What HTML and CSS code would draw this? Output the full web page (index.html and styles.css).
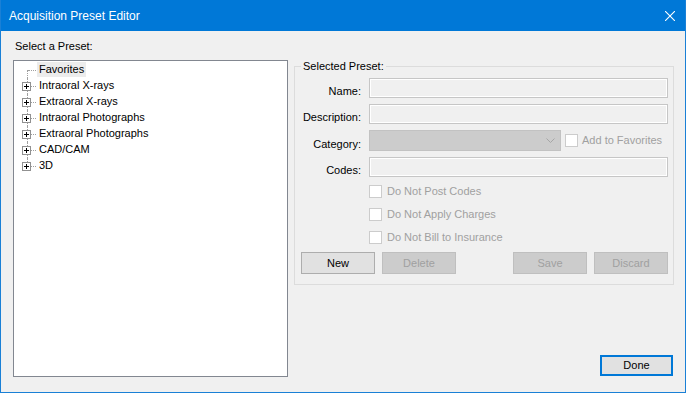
FILE: index.html
```html
<!DOCTYPE html>
<html>
<head>
<meta charset="UTF-8">
<title>Acquisition Preset Editor</title>
<link rel="stylesheet" href="styles.css">
</head>
<body>
<div class="window">
    <div class="titlebar">
        <span class="title">Acquisition Preset Editor</span>
        <svg class="close" width="10" height="10" viewBox="0 0 10 10">
            <path d="M0 0L10 10M10 0L0 10" stroke="#fff" stroke-width="1.1" fill="none"/>
        </svg>
    </div>

    <div class="main">
        <div class="left">
            <div class="caption">Select a Preset:</div>
            <div class="tree">
                <div class="node first">
                    <div class="gutter"></div>
                    <span class="label selected">Favorites</span>
                </div>
                <div class="node">
                    <div class="gutter"><svg class="plus" width="9" height="9"><rect x="0.5" y="0.5" width="8" height="8" fill="#fff" stroke="#919191"/><path d="M2 4.5h5M4.5 2v5" stroke="#000"/></svg></div>
                    <span class="label">Intraoral X-rays</span>
                </div>
                <div class="node">
                    <div class="gutter"><svg class="plus" width="9" height="9"><rect x="0.5" y="0.5" width="8" height="8" fill="#fff" stroke="#919191"/><path d="M2 4.5h5M4.5 2v5" stroke="#000"/></svg></div>
                    <span class="label">Extraoral X-rays</span>
                </div>
                <div class="node">
                    <div class="gutter"><svg class="plus" width="9" height="9"><rect x="0.5" y="0.5" width="8" height="8" fill="#fff" stroke="#919191"/><path d="M2 4.5h5M4.5 2v5" stroke="#000"/></svg></div>
                    <span class="label">Intraoral Photographs</span>
                </div>
                <div class="node">
                    <div class="gutter"><svg class="plus" width="9" height="9"><rect x="0.5" y="0.5" width="8" height="8" fill="#fff" stroke="#919191"/><path d="M2 4.5h5M4.5 2v5" stroke="#000"/></svg></div>
                    <span class="label">Extraoral Photographs</span>
                </div>
                <div class="node">
                    <div class="gutter"><svg class="plus" width="9" height="9"><rect x="0.5" y="0.5" width="8" height="8" fill="#fff" stroke="#919191"/><path d="M2 4.5h5M4.5 2v5" stroke="#000"/></svg></div>
                    <span class="label">CAD/CAM</span>
                </div>
                <div class="node last">
                    <div class="gutter"><svg class="plus" width="9" height="9"><rect x="0.5" y="0.5" width="8" height="8" fill="#fff" stroke="#919191"/><path d="M2 4.5h5M4.5 2v5" stroke="#000"/></svg></div>
                    <span class="label">3D</span>
                </div>
            </div>
        </div>

        <div class="right">
            <fieldset class="group">
                <legend>Selected Preset:</legend>
                <div class="fields">
                    <label class="lbl">Name:</label>
                    <div class="textbox"></div>

                    <label class="lbl">Description:</label>
                    <div class="textbox"></div>

                    <label class="lbl">Category:</label>
                    <div class="catrow">
                        <div class="combo">
                            <svg class="chev" width="9" height="5" viewBox="0 0 9 5"><path d="M0.5 0.5L4.5 4.5L8.5 0.5" stroke="#a6a6a6" fill="none"/></svg>
                        </div>
                        <div class="check"></div>
                        <span class="dim">Add to Favorites</span>
                    </div>

                    <label class="lbl">Codes:</label>
                    <div class="textbox"></div>

                    <div class="checks">
                        <div class="checkrow"><div class="check"></div><span class="dim">Do Not Post Codes</span></div>
                        <div class="checkrow"><div class="check"></div><span class="dim">Do Not Apply Charges</span></div>
                        <div class="checkrow"><div class="check"></div><span class="dim">Do Not Bill to Insurance</span></div>
                    </div>
                </div>
                <div class="buttons">
                    <div class="btn">New</div>
                    <div class="btn disabled">Delete</div>
                    <div class="spacer"></div>
                    <div class="btn disabled">Save</div>
                    <div class="btn disabled">Discard</div>
                </div>
            </fieldset>

            <div class="btn done">Done</div>
        </div>
    </div>
</div>
</body>
</html>
```

FILE: styles.css
```css
body
{
    margin: 0;
    padding: 0;
    font-family: "Liberation Sans", Arial, sans-serif;
    font-size: 11px;
    color: #000;
}

.window
{
    width: 686px;
    height: 393px;
    box-sizing: border-box;
    border: 1px solid #1a80d6;
    border-top: 0;
    background: #f0f0f0;
    display: flex;
    flex-direction: column;
}

.titlebar
{
    height: 31px;
    flex: none;
    background: #0078d7;
    color: #fff;
    display: flex;
    align-items: center;
    justify-content: space-between;
    padding: 0 10px 0 8px;
}

.title
{
    font-size: 12px;
    padding-top: 1px;
}

.close
{
    display: block;
}

.main
{
    flex: 1;
    display: flex;
    gap: 6px;
    padding: 9px 11px 15px 12px;
}

/* left side: preset tree */

.left
{
    width: 275px;
    display: flex;
    flex-direction: column;
}

.caption
{
    line-height: 13px;
    padding-left: 2px;
}

.tree
{
    flex: 1;
    margin-top: 7px;
    border: 1px solid #828790;
    background: #fff;
    padding-top: 1px;
}

.node
{
    display: flex;
    height: 16px;
}

.gutter
{
    position: relative;
    width: 23px;
    flex: none;
}

.gutter::before
{
    content: "";
    position: absolute;
    left: 13px;
    top: 0;
    bottom: 0;
    border-left: 1px dotted #a0a0a0;
}

.first .gutter::before
{
    top: 8px;
}

.last .gutter::before
{
    bottom: 8px;
}

.gutter::after
{
    content: "";
    position: absolute;
    left: 14px;
    top: 8px;
    width: 8px;
    border-top: 1px dotted #a0a0a0;
}

.plus
{
    position: absolute;
    left: 8px;
    top: 4px;
    z-index: 1;
}

.label
{
    height: 15px;
    line-height: 15px;
    padding: 0 2px;
    white-space: nowrap;
}

.selected
{
    background: #ececec;
}

/* right side: selected preset */

.right
{
    flex: 1;
    display: flex;
    flex-direction: column;
    padding-top: 20px;
}

.group
{
    margin: 0;
    padding: 0 5px 10px 0;
    border: 1px solid #dcdcdc;
}

.group legend
{
    margin-left: 6px;
    padding: 0 2px;
    line-height: 13px;
}

.fields
{
    display: grid;
    grid-template-columns: 66px 1fr;
    column-gap: 8px;
    row-gap: 6px;
    padding-top: 5px;
}

.lbl
{
    text-align: right;
    align-self: end;
    line-height: 13px;
    white-space: nowrap;
}

.textbox
{
    height: 20px;
    box-sizing: border-box;
    border: 1px solid #c6c6c6;
    box-shadow: inset 0 0 0 1px #fff;
    background: #f0f0f0;
}

.catrow
{
    display: flex;
    align-items: center;
}

.combo
{
    width: 192px;
    height: 21px;
    box-sizing: border-box;
    border: 1px solid #c2c2c2;
    background: #cccccc;
    display: flex;
    align-items: center;
    justify-content: flex-end;
    padding-right: 5px;
}

.chev
{
    display: block;
}

.check
{
    width: 13px;
    height: 13px;
    box-sizing: border-box;
    border: 1px solid #cccccc;
    background: #fff;
    flex: none;
}

.catrow .check
{
    margin-left: 4px;
}

.dim
{
    color: #a0a0a0;
    margin-left: 4px;
    line-height: 13px;
    white-space: nowrap;
}

.checks
{
    grid-column: 2;
    display: flex;
    flex-direction: column;
    gap: 10px;
    padding-top: 2px;
}

.checkrow
{
    display: flex;
    align-items: center;
    height: 13px;
}

.checkrow .dim
{
    margin-left: 5px;
}

.buttons
{
    display: flex;
    gap: 7px;
    margin-top: 8px;
    padding-left: 6px;
}

.spacer
{
    flex: 1;
}

.btn
{
    width: 74px;
    height: 22px;
    box-sizing: border-box;
    border: 1px solid #adadad;
    background: #e1e1e1;
    text-align: center;
    line-height: 20px;
}

.btn.disabled
{
    background: #cccccc;
    border-color: #bfbfbf;
    color: #a0a0a0;
}

.done
{
    margin-top: auto;
    align-self: flex-end;
    width: 73px;
    height: 21px;
    border: 2px solid #0078d7;
    line-height: 17px;
    margin-right: 1px;
    margin-bottom: 1px;
}
```
